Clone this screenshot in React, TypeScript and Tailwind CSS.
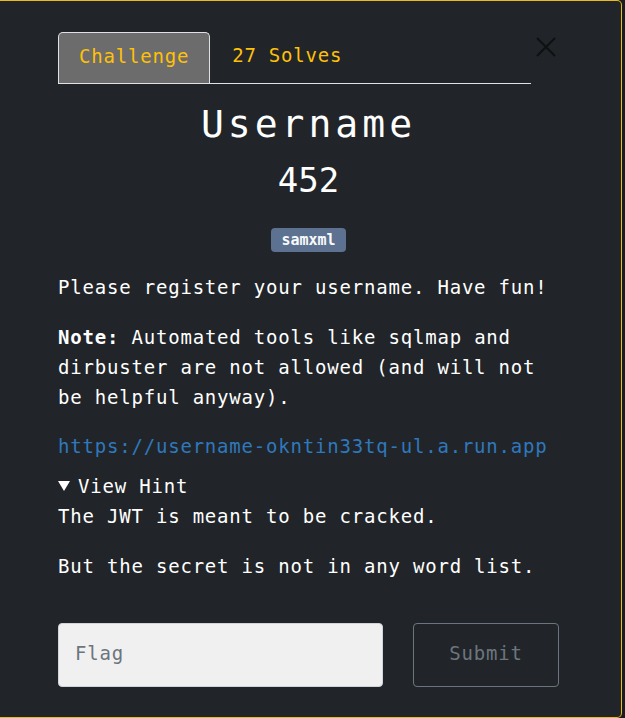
import React from "react";

const mono = { fontFamily: '"DejaVu Sans Mono", "Liberation Mono", monospace' };

export default function App() {
  return (
    <div className="w-[625px] h-[718px] bg-[#1a1c20]" style={mono}>
      <div className="relative w-[622px] h-[718px] bg-[#212529] border-t border-r border-b border-[#e9b91d] rounded-r-[5px] pl-[58px] pt-[31px]">
        {/* close */}
        <button className="absolute left-[535px] top-[35px] w-[22px] h-[22px]">
          <svg viewBox="0 0 22 22" className="w-[22px] h-[22px]">
            <path d="M2 2L20 20M20 2L2 20" stroke="#0f1012" strokeWidth="2.2" />
          </svg>
        </button>

        {/* tabs */}
        <div className="flex w-[473px] border-b border-[#dee2e6] text-[19px] tracking-[0.8px] text-[#ffc107]">
          <div className="h-[51px] flex items-center pb-[4px] px-[20px] bg-[#6c6c6c] border-t border-l border-r border-[#dee2e6] rounded-t-[5px]">
            Challenge
          </div>
          <div className="h-[51px] flex items-center pb-[4px] px-[22px]">27 Solves</div>
        </div>

        <div className="w-[501px] text-white">
          <h2 className="mt-[17px] text-center text-[38px] leading-[46px] tracking-[4px]">Username</h2>
          <h3 className="mt-[13px] text-center text-[34px] leading-[41px]">452</h3>

          <div className="mt-[27px] flex justify-center">
            <span className="h-[24px] px-[10px] flex items-center rounded-[4px] bg-[#5d7190] text-[#f8f9fa] text-[15px] font-bold">
              samxml
            </span>
          </div>

          <div className="mt-[20px] text-[19px] leading-[30px] tracking-[0.8px]">
            <p>Please register your username. Have fun!</p>
            <p className="mt-[20px]">
              <span className="font-bold">Note:</span> Automated tools like sqlmap and dirbuster are not allowed (and will not be helpful anyway).
            </p>
            <p className="mt-[19px]">
              <a className="text-[#2f78bd]">https://username-okntin33tq-ul.a.run.app</a>
            </p>

            <div className="mt-[10px] flex items-center">
              <svg viewBox="0 0 12 10" className="w-[12px] h-[10px]">
                <path d="M0 0H12L6 10Z" fill="#ffffff" />
              </svg>
              <span className="ml-[8px]">View Hint</span>
            </div>
            <p>The JWT is meant to be cracked.</p>
            <p className="mt-[20px]">But the secret is not in any word list.</p>
          </div>

          <div className="mt-[42px] flex">
            <input
              placeholder="Flag"
              className="w-[325px] h-[64px] rounded-[4px] bg-[#f0f0f0] border border-[#ced4da] px-[16px] pb-[4px] text-[19px] tracking-[0.8px] text-[#495057] placeholder:text-[#6c757d] outline-none"
              style={mono}
            />
            <button className="ml-[30px] w-[146px] h-[64px] pb-[4px] rounded-[4px] border border-[#6c757d] text-[#6c757d] text-[19px] tracking-[0.8px]">
              Submit
            </button>
          </div>
        </div>
      </div>
    </div>
  );
}
